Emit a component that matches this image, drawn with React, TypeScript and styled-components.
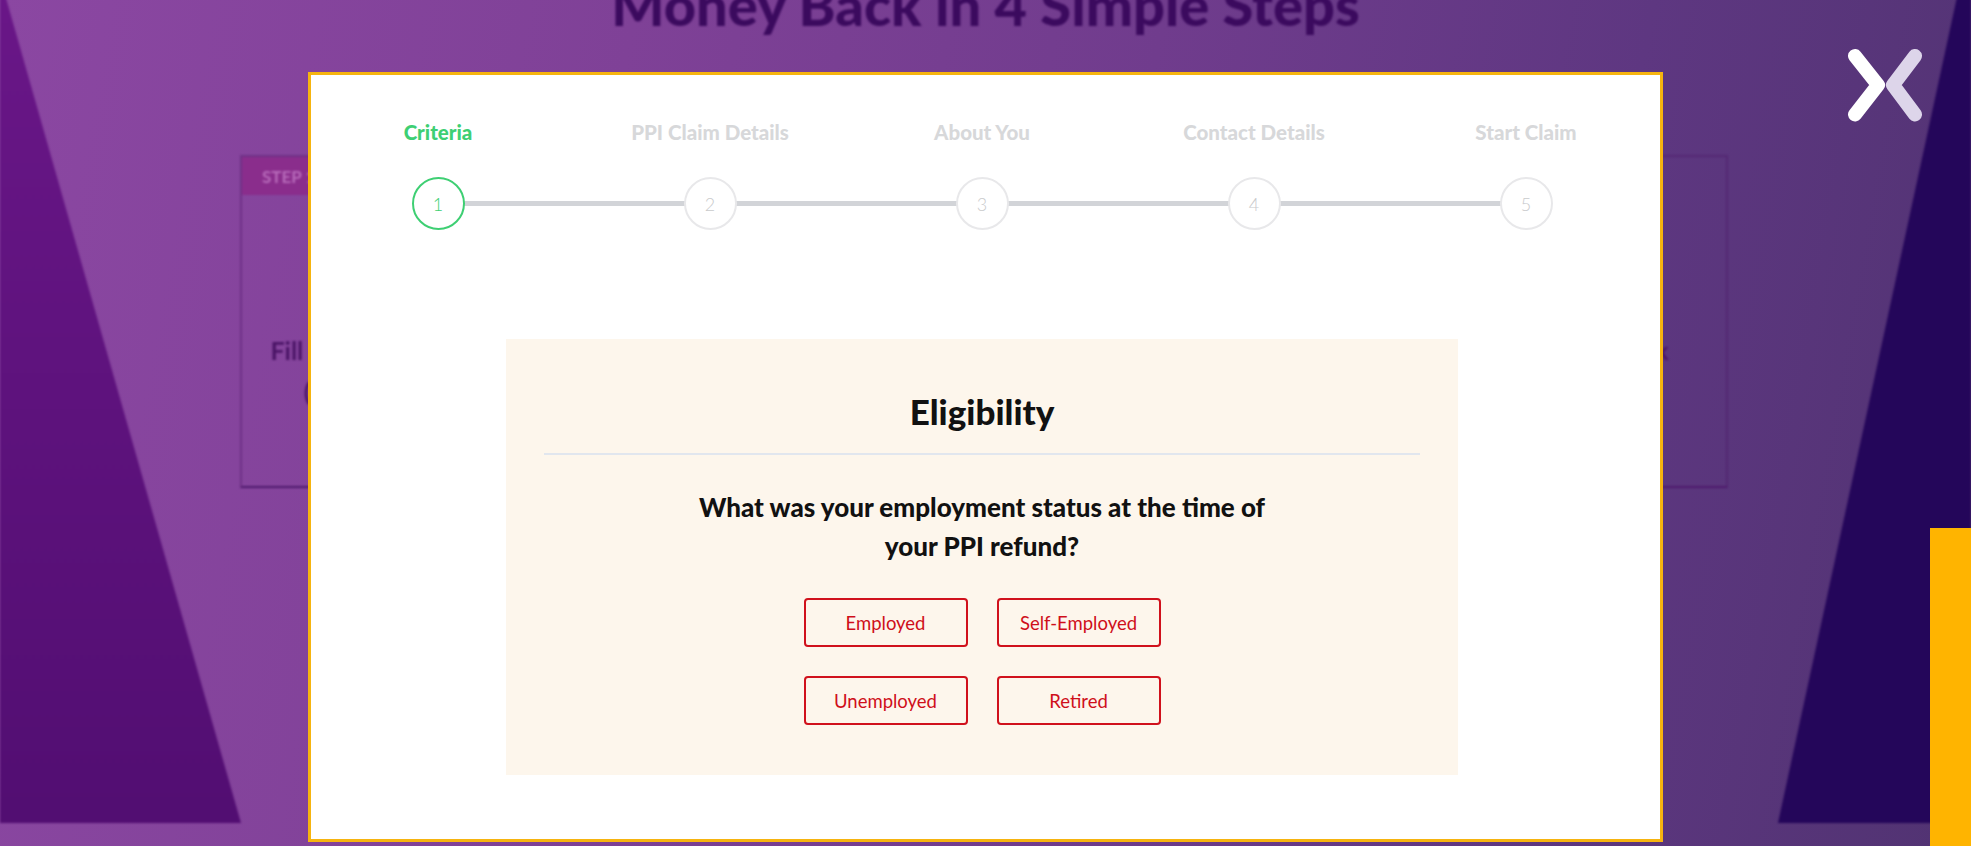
import styled, { createGlobalStyle } from "styled-components";

const GlobalStyle = createGlobalStyle`
  html, body, #root {
    margin: 0;
    padding: 0;
  }
  body {
    font-family: "Lato", "Liberation Sans", sans-serif;
    background: #5a3680;
  }
  * {
    box-sizing: border-box;
  }
`;

const FONT = `"Lato", "Liberation Sans", sans-serif`;

const steps = ["Criteria", "PPI Claim Details", "About You", "Contact Details", "Start Claim"];
const options = ["Employed", "Self-Employed", "Unemployed", "Retired"];

const stepCards = [
  { lines: ["Fill in our simple web form", "(it only takes 2 mins)"], active: true },
  { lines: ["We check your claim", "with the lender"], active: false },
  { lines: ["We handle all the", "paperwork for you"], active: false },
  { lines: ["Get your money back", "in your account"], active: false },
];

const Page = styled.div`
  position: relative;
  width: 100%;
  height: 846px;
  overflow: hidden;
  background: linear-gradient(100deg, #8b47a2 0%, #7f4197 30%, #703c8d 55%, #5e3781 78%, #513372 100%);
`;

const Backdrop = styled.section`
  position: relative;
  height: 100%;
  filter: blur(0.8px);

  &::before {
    content: "";
    position: absolute;
    left: 0;
    top: 0;
    width: 241px;
    height: 100%;
    background: linear-gradient(180deg, #6a1788 0%, #520e72 100%);
    clip-path: polygon(0 0, 100% 100%, 0 100%);
  }

  &::after {
    content: "";
    position: absolute;
    right: 0;
    top: 0;
    width: 193px;
    height: 100%;
    background: #24065a;
    clip-path: polygon(95% 0, 100% 0, 100% 100%, 0 100%);
  }
`;

const Heading = styled.h1`
  margin: -23px 0 0;
  font-family: ${FONT};
  font-weight: 900;
  font-size: 56px;
  line-height: 56px;
  text-align: center;
  color: #3b0a5e;
`;

const CardRow = styled.div`
  display: grid;
  grid-template-columns: repeat(4, 1fr);
  gap: 24px;
  width: 1488px;
  margin: 122px 0 0 240px;
`;

const StepCard = styled.div`
  height: 333px;
  border: 2px solid rgba(72, 18, 98, 0.35);
  border-bottom-color: #4f1a6d;
  display: flex;
  flex-direction: column;
`;

const CardHeader = styled.div<{ $active: boolean }>`
  height: 38px;
  padding: 0 20px;
  display: flex;
  align-items: center;
  background: ${({ $active }) => ($active ? "#8a2d8c" : "transparent")};
  color: ${({ $active }) => ($active ? "#b86cbb" : "transparent")};
  font-family: ${FONT};
  font-weight: 700;
  font-size: 17px;
`;

const CardText = styled.p`
  margin: 0;
  padding-top: 135px;
  text-align: center;
  font-family: ${FONT};
  font-weight: 700;
  font-size: 25px;
  line-height: 41px;
  color: #4a1466;
`;

const Overlay = styled.div`
  position: absolute;
  inset: 0;
  display: flex;
  justify-content: center;
  padding-top: 72px;
`;

const CloseButton = styled.button`
  position: absolute;
  top: 48px;
  right: 48px;
  width: 75px;
  height: 75px;
  padding: 0;
  border: 0;
  background: none;
  cursor: pointer;
`;

const SideTab = styled.div`
  position: absolute;
  right: 0;
  top: 528px;
  width: 41px;
  height: 318px;
  background: #ffb400;
`;

const Modal = styled.div`
  width: 1355px;
  height: 770px;
  background: #fff;
  border: 3px solid #f6b40f;
  padding: 45px 7px 0 0;
  display: flex;
  flex-direction: column;
  align-items: center;
`;

const Stepper = styled.ol`
  list-style: none;
  margin: 0;
  padding: 0;
  display: grid;
  grid-template-columns: repeat(5, 272px);
  justify-content: center;
`;

const Step = styled.li<{ $last: boolean }>`
  position: relative;
  display: flex;
  flex-direction: column;
  align-items: center;
  gap: 33px;

  &::after {
    content: "";
    display: ${({ $last }) => ($last ? "none" : "block")};
    position: absolute;
    left: 50%;
    top: 81px;
    width: 100%;
    height: 5px;
    background: #d2d4d8;
  }
`;

const StepLabel = styled.span<{ $active: boolean }>`
  font-family: ${FONT};
  font-weight: 900;
  font-size: 20.5px;
  line-height: 24px;
  color: ${({ $active }) => ($active ? "#3ecf73" : "#d7d8da")};
`;

const StepCircle = styled.span<{ $active: boolean }>`
  position: relative;
  z-index: 1;
  width: 53px;
  height: 53px;
  border-radius: 50%;
  background: #fff;
  border: 2px solid ${({ $active }) => ($active ? "#3ecf73" : "#e8e8ea")};
  color: ${({ $active }) => ($active ? "#3ecf73" : "#c9cacc")};
  display: flex;
  align-items: center;
  justify-content: center;
  font-family: ${FONT};
  font-weight: 300;
  font-size: 18px;
`;

const FormBox = styled.section`
  width: 952px;
  margin-top: 109px;
  padding: 53px 38px 50px;
  background: #fdf6ec;
  display: flex;
  flex-direction: column;
  align-items: center;
`;

const FormTitle = styled.h2`
  margin: 0;
  font-family: ${FONT};
  font-weight: 900;
  font-size: 35px;
  line-height: 38px;
  color: #111;
`;

const Divider = styled.hr`
  width: 100%;
  height: 2px;
  margin: 23px 0 0;
  border: 0;
  background: #e1e6ee;
`;

const Question = styled.p`
  margin: 33px 0 0;
  font-family: ${FONT};
  font-weight: 900;
  font-size: 26px;
  line-height: 39px;
  text-align: center;
  color: #111;
`;

const Options = styled.div`
  margin-top: 32px;
  display: grid;
  grid-template-columns: repeat(2, 164px);
  gap: 29px;
`;

const OptionButton = styled.button`
  height: 49px;
  border: 2px solid #d0111c;
  border-radius: 4px;
  background: transparent;
  color: #cf0f1a;
  font-family: ${FONT};
  font-size: 18.5px;
  cursor: pointer;
`;

export default function App() {
  return (
    <>
      <GlobalStyle />
      <Page>
        <Backdrop>
          <Heading>Money Back in 4 Simple Steps</Heading>
          <CardRow>
            {stepCards.map((card, i) => (
              <StepCard key={i}>
                <CardHeader $active={card.active}>STEP {i + 1}</CardHeader>
                <CardText>
                  {card.lines[0]}
                  <br />
                  {card.lines[1]}
                </CardText>
              </StepCard>
            ))}
          </CardRow>
        </Backdrop>

        <Overlay>
          <Modal>
            <Stepper>
              {steps.map((label, i) => (
                <Step key={label} $last={i === steps.length - 1}>
                  <StepLabel $active={i === 0}>{label}</StepLabel>
                  <StepCircle $active={i === 0}>{i + 1}</StepCircle>
                </Step>
              ))}
            </Stepper>

            <FormBox>
              <FormTitle>Eligibility</FormTitle>
              <Divider />
              <Question>
                What was your employment status at the time of
                <br />
                your PPI refund?
              </Question>
              <Options>
                {options.map((o) => (
                  <OptionButton key={o}>{o}</OptionButton>
                ))}
              </Options>
            </FormBox>
          </Modal>

          <CloseButton aria-label="Close">
            <svg width="75" height="75" viewBox="0 0 75 75" fill="none">
              <polyline
                points="7,8 30,37 7,66.5"
                stroke="#ffffff"
                strokeWidth="14"
                strokeLinecap="round"
                strokeLinejoin="round"
              />
              <polyline
                points="67,8 45,37 67,66.5"
                stroke="#ddd5ea"
                strokeWidth="14"
                strokeLinecap="round"
                strokeLinejoin="round"
              />
            </svg>
          </CloseButton>
          <SideTab />
        </Overlay>
      </Page>
    </>
  );
}
